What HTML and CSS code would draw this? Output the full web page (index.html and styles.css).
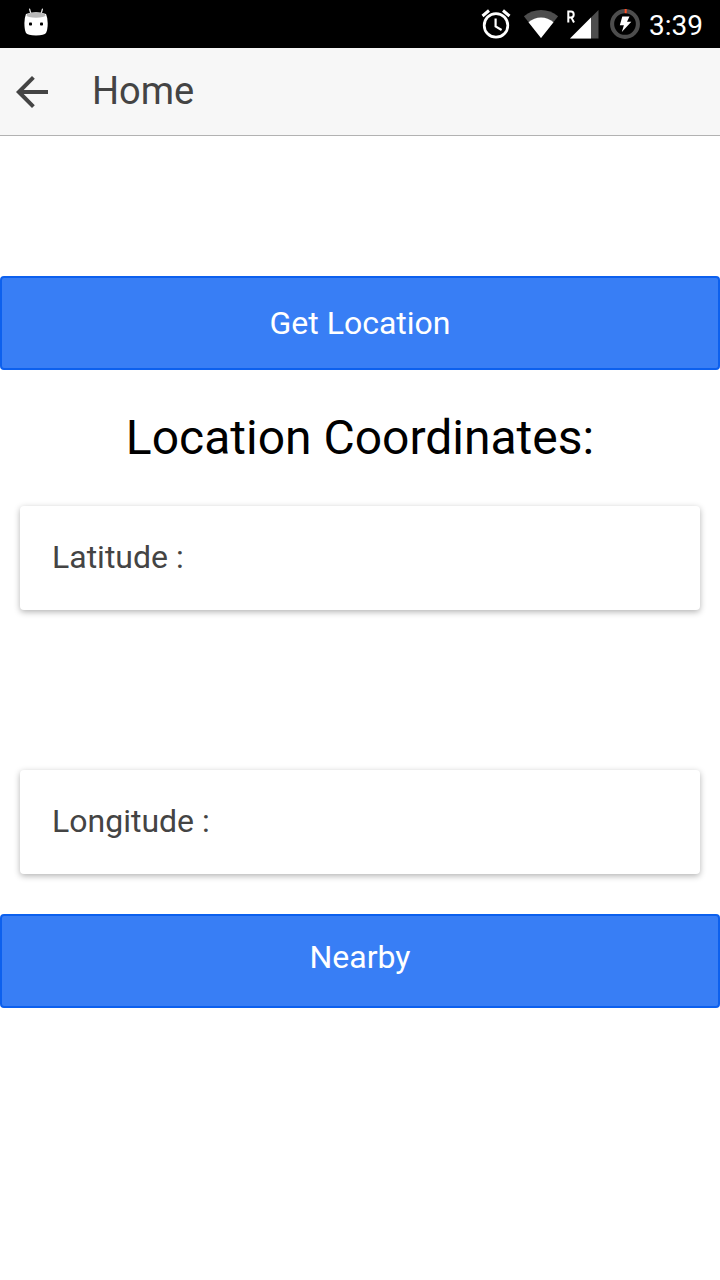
FILE: index.html
```html
<!DOCTYPE html>
<html lang="en">
<head>
<meta charset="utf-8">
<title>Home</title>
<link rel="stylesheet" href="styles.css">
</head>
<body>
<div class="status-bar">
  <svg class="droid" width="24" height="28" viewBox="0 0 24 28">
    <path d="M5.6 1.2 7 6M18.400 1.200 17 6" stroke="#ddd" stroke-width="1.300" stroke-linecap="round"/>
    <path d="M2 6Q12 2.500 22 6Q23.700 10 23.700 15Q23.700 22 22 25Q20.500 27.400 12 27.400Q3.500 27.400 2 25Q.4 22 .4 15Q.4 10 2 6Z" fill="#fff"/>
    <ellipse cx="12" cy="7.200" rx="9.600" ry="2.600" fill="#b9b9b9"/>
    <rect x="5" y="14.500" width="3" height="3" rx=".8" fill="#000"/>
    <rect x="16" y="14.500" width="3" height="3" rx=".8" fill="#000"/>
  </svg>
  <div class="indicators">
    <svg class="alarm" width="30" height="30" viewBox="0 0 30 30" fill="none" stroke="#fff">
      <circle cx="15" cy="16.400" r="11.800" stroke-width="2.700"/>
      <path d="M1.500 7 8 1.500M22 1.500 28.500 7" stroke-width="3"/>
      <path d="M14.600 9.500V17.400L20.600 21" stroke-width="2.200"/>
    </svg>
    <svg class="wifi" width="36" height="30" viewBox="0 0 36 30">
      <path d="M18 29 .9 7.300Q8.500 1 18 1T35.100 7.300Z" fill="#4d4d4d"/>
      <path d="M18 29 5.500 13.200Q11 8.500 18 8.500T30.500 13.200Z" fill="#fff"/>
    </svg>
    <svg class="signal" width="32" height="30" viewBox="0 0 32 30">
      <path d="M31.500 1V29.500H3Z" fill="#4d4d4d"/>
      <path d="M24 8.500V29.500H3Z" fill="#fff"/>
      <path d="M1.300 13.500V2.600H4Q6.700 2.600 6.700 5.500T4 8.400H1.300M4.300 8.400 7 13.500" fill="none" stroke="#fff" stroke-width="2"/>
    </svg>
    <svg class="battery" width="30" height="30" viewBox="0 0 30 30">
      <circle cx="15" cy="15" r="12.900" fill="none" stroke="#4d4d4d" stroke-width="4.100"/>
      <path d="M15.700 0V4.200" stroke="#ff4b22" stroke-width="2"/>
      <path d="M12.300 7.500H19.500L17 12.700H21.300L11.800 23L13.900 16.300H9.800Z" fill="#fff"/>
    </svg>
    <span class="clock">3:39</span>
  </div>
</div>
<header class="toolbar">
  <svg class="back" width="32" height="32" viewBox="0 0 32 32">
    <path d="M32 14V18H7.700L18.800 29.200L16 32L0 16L16 0L18.800 2.800L7.700 14Z" fill="#444"/>
  </svg>
  <h1 class="title">Home</h1>
</header>
<main class="content">
  <button class="button">Get Location</button>
  <h2 class="heading">Location Coordinates:</h2>
  <section class="card">Latitude :</section>
  <section class="card card-longitude">Longitude :</section>
  <button class="button button-nearby">Nearby</button>
</main>
</body>
</html>
```
FILE: styles.css
```css
* { box-sizing: border-box; }
body {
  margin: 0;
  min-height: 1280px;
  background: #fff;
  color: #444;
  font-family: Roboto, sans-serif;
}
svg { display: block; flex: none; }
.status-bar {
  display: flex;
  justify-content: space-between;
  height: 48px;
  padding: 0 16px 0 24px;
  background: #000;
}
.droid { margin-top: 8px; }
.indicators { display: flex; }
.alarm { margin: 9px 12px 0 0; }
.wifi { margin: 9px 8px 0 0; }
.signal { margin: 9px 11px 0 0; }
.battery { margin: 9px 9px 0 0; }
.clock {
  width: 55px;
  color: #fff;
  font-size: 28px;
  line-height: 52px;
  white-space: nowrap;
}
.toolbar {
  display: flex;
  align-items: center;
  gap: 44px;
  height: 88px;
  padding-left: 16px;
  background: #f7f7f7;
  border-bottom: 1px solid #b2b2b2;
}
.title {
  margin: 0 0 2px;
  font-size: 38px;
  font-weight: 400;
  line-height: 84px;
}
.content { padding-top: 140px; }
.button {
  display: block;
  width: 100%;
  height: 94px;
  padding: 0;
  background: #387ef5;
  border: 2px solid #0c60ee;
  border-radius: 4px;
  color: #fff;
  font: 400 32px/90px Roboto, sans-serif;
}
.heading {
  margin: 37px 0 37px;
  color: #000;
  font-size: 48px;
  font-weight: 400;
  line-height: 62px;
  text-align: center;
}
.card {
  height: 104px;
  margin: 0 20px;
  padding: 0 32px;
  border-radius: 4px;
  background: #fff;
  box-shadow: 0 2px 6px rgba(0, 0, 0, .3);
  font-size: 32px;
  line-height: 103px;
}
.card-longitude { margin-top: 160px; }
.button-nearby {
  margin-top: 40px;
  padding-bottom: 8px;
  line-height: 82px;
}
```
